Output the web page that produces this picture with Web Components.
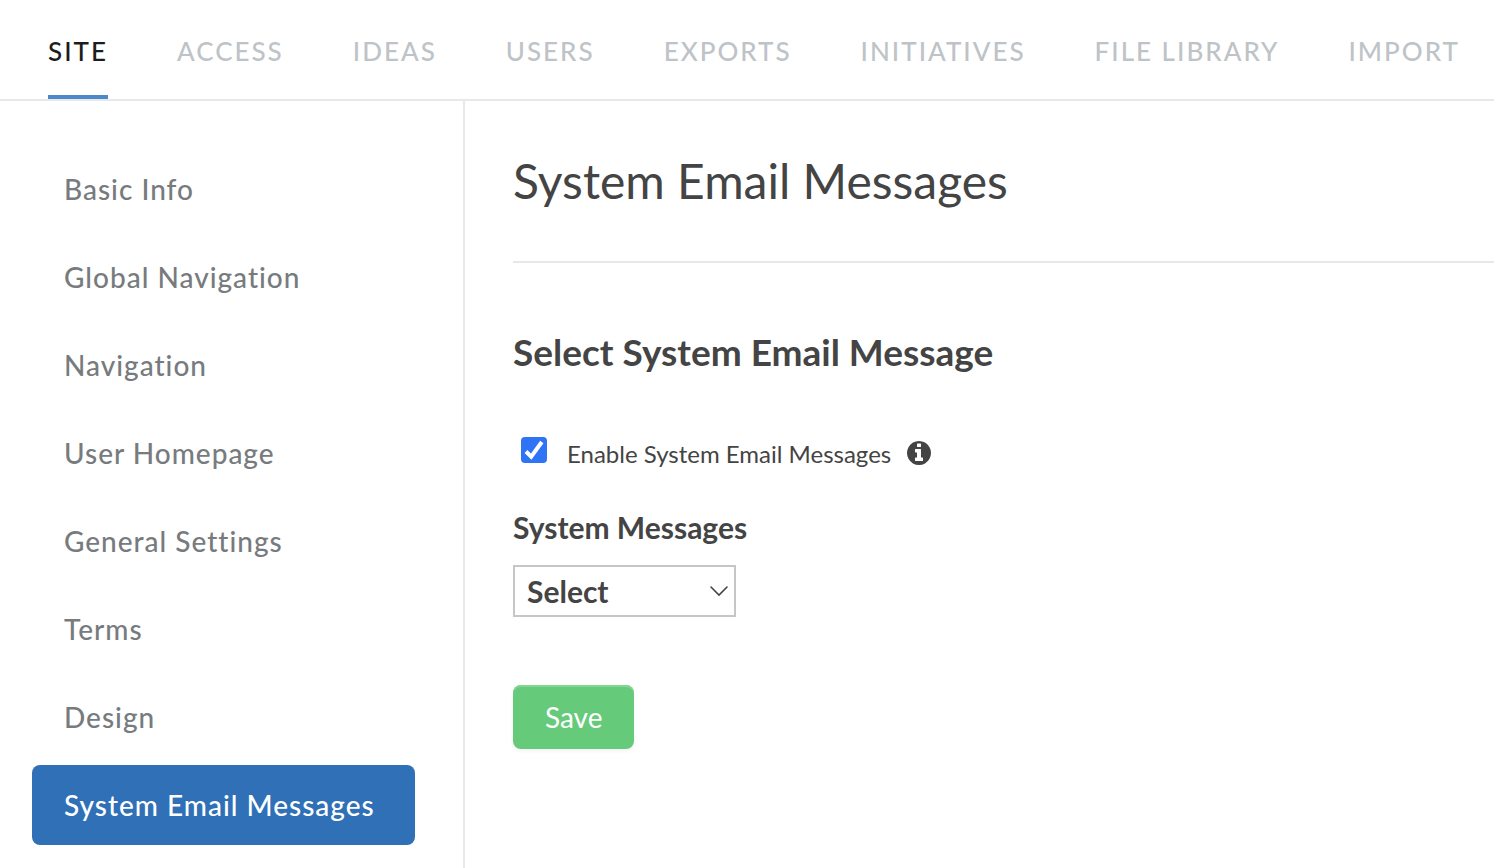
<!DOCTYPE html>
<html lang="en">
<head>
<meta charset="utf-8">
<title>System Email Messages</title>
<style>
html{height:100%}
body{margin:0;min-height:100%;background:#fff;font-family:Lato,"Liberation Sans",sans-serif;color:#444;overflow-x:hidden}
</style>
</head>
<body>
<admin-page></admin-page>
<script>
class NavTabs extends HTMLElement{
  constructor(){super();this.attachShadow({mode:'open'}).innerHTML=`
<style>
:host{display:block;border-bottom:2px solid #e8e8e8}
nav{display:flex;gap:69px;padding:0 32px 0 48px}
</style><nav aria-label="Sections"><slot></slot></nav>`}
}
class NavTab extends HTMLElement{
  connectedCallback(){this.attachShadow({mode:'open'}).innerHTML=`
<style>
:host{display:block;flex:none}
a{display:block;box-sizing:border-box;height:99px;padding-top:35px;font-size:26px;line-height:32px;font-weight:500;letter-spacing:2px;color:#bec3c7;text-decoration:none;white-space:nowrap;border-bottom:4px solid transparent}
:host([current]) a{color:#1c1c1c;border-color:#4a89ca}
</style><a href="#"><slot></slot></a>`}
}
class SideItem extends HTMLElement{
  connectedCallback(){this.attachShadow({mode:'open'}).innerHTML=`
<style>
:host{display:block}
a{display:block;padding:22px 32px;font-size:28px;line-height:36px;font-weight:500;letter-spacing:1px;color:#777b7e;text-decoration:none;border-radius:8px}
:host([current]) a{color:#fff;background:#2f70b7}
</style><a href="#"><slot></slot></a>`}
}
class SideNav extends HTMLElement{
  constructor(){super();this.attachShadow({mode:'open'}).innerHTML=`
<style>
:host{display:block;border-right:2px solid #e8e8e8}
nav{display:flex;flex-direction:column;gap:8px;padding:48px 48px 23px 32px}
</style><nav aria-label="Site settings"><slot></slot></nav>`}
}
class InfoIcon extends HTMLElement{
  constructor(){super();this.attachShadow({mode:'open'}).innerHTML=`
<style>:host{display:block;width:24px;height:24px}svg{display:block;width:100%;height:100%}</style>
<svg viewBox="0 0 1536 1536" fill="#444" aria-hidden="true"><path d="M1024 1248v-160q0-14-9-23t-23-9h-96V544q0-14-9-23t-23-9H544q-14 0-23 9t-9 23v160q0 14 9 23t23 9h96v320h-96q-14 0-23 9t-9 23v160q0 14 9 23t23 9h448q14 0 23-9t9-23zM896 352V192q0-14-9-23t-23-9H672q-14 0-23 9t-9 23v160q0 14 9 23t23 9h192q14 0 23-9t9-23zM1536 768q0 209-103 385.500T1153.500 1433 768 1536t-385.500-103T103 1153.500 0 768t103-385.500T382.500 103 768 0t385.500 103T1433 382.500 1536 768z"/></svg>`}
}
class MessageForm extends HTMLElement{
  constructor(){super();this.attachShadow({mode:'open'}).innerHTML=`
<style>
:host{display:block}
h1{margin:0;padding:46px 0;font-size:48px;line-height:68px;font-weight:400;border-bottom:2px solid #e8e8e8}
h2{margin:63px 0 60px;font-size:37px;line-height:52px;font-weight:700}
.enable{display:flex;align-items:center;height:32px;font-size:24px;line-height:32px;margin-bottom:37px}
.tick{display:grid;margin:0 20px 8px 8px}
.tick input,.tick svg{grid-area:1/1;width:26px;height:26px}
.tick input{appearance:none;margin:0;border-radius:4px;background:#3074f6}
.tick svg{pointer-events:none;visibility:hidden}
.tick input:checked+svg{visibility:visible}
info-icon{margin:0 0 2px 16px}
.select-label{display:block;font-size:30px;line-height:40px;font-weight:700}
.picker{display:grid;width:223px;margin:18px 0 68px}
select{grid-area:1/1;appearance:none;box-sizing:border-box;height:52px;width:100%;padding:0 12px;border:2px solid #c6c6c6;border-radius:0;background:#fff;color:#444;font:700 30px/40px Lato,"Liberation Sans",sans-serif}
.picker svg{grid-area:1/1;place-self:center end;width:20px;height:12px;margin-right:7px;pointer-events:none}
button{box-sizing:border-box;height:64px;padding:0 32px;border:0;border-radius:8px;background:#66ca7b;box-shadow:inset 0 2px 0 #85d595,0 2px 4px #0000000d;color:#fff;font:400 28px/40px Lato,"Liberation Sans",sans-serif}
</style>
<h1>System Email Messages</h1>
<form>
<h2>Select System Email Message</h2>
<div class="enable"><span class="tick"><input type="checkbox" id="enable" checked><svg viewBox="0 0 26 26" aria-hidden="true"><path d="M5 14.500l5.200 5.200L20.800 5" fill="none" stroke="#fff" stroke-width="4"/></svg></span><label for="enable">Enable System Email Messages</label><info-icon></info-icon></div>
<label class="select-label" for="message">System Messages</label>
<div class="picker"><select id="message"><option>Select</option></select><svg viewBox="0 0 20 12" aria-hidden="true"><path d="M2 2l8 8 8-8" fill="none" stroke="#444" stroke-width="1.600" stroke-linecap="round"/></svg></div>
<button type="button">Save</button>
</form>`}
}
class AdminPage extends HTMLElement{
  constructor(){super();this.attachShadow({mode:'open'}).innerHTML=`
<style>
:host{display:flex;flex-direction:column;min-height:100vh}
.body{flex:1;display:grid;grid-template-columns:465px minmax(0,1fr)}
main{padding-left:48px}
</style>
<nav-tabs><nav-tab current>SITE</nav-tab><nav-tab>ACCESS</nav-tab><nav-tab>IDEAS</nav-tab><nav-tab>USERS</nav-tab><nav-tab>EXPORTS</nav-tab><nav-tab>INITIATIVES</nav-tab><nav-tab>FILE LIBRARY</nav-tab><nav-tab>IMPORT</nav-tab></nav-tabs>
<div class="body">
<side-nav><side-item>Basic Info</side-item><side-item>Global Navigation</side-item><side-item>Navigation</side-item><side-item>User Homepage</side-item><side-item>General Settings</side-item><side-item>Terms</side-item><side-item>Design</side-item><side-item current>System Email Messages</side-item></side-nav>
<main><message-form></message-form></main>
</div>`}
}
customElements.define('nav-tabs',NavTabs);
customElements.define('nav-tab',NavTab);
customElements.define('side-item',SideItem);
customElements.define('side-nav',SideNav);
customElements.define('info-icon',InfoIcon);
customElements.define('message-form',MessageForm);
customElements.define('admin-page',AdminPage);
</script>
</body>
</html>
